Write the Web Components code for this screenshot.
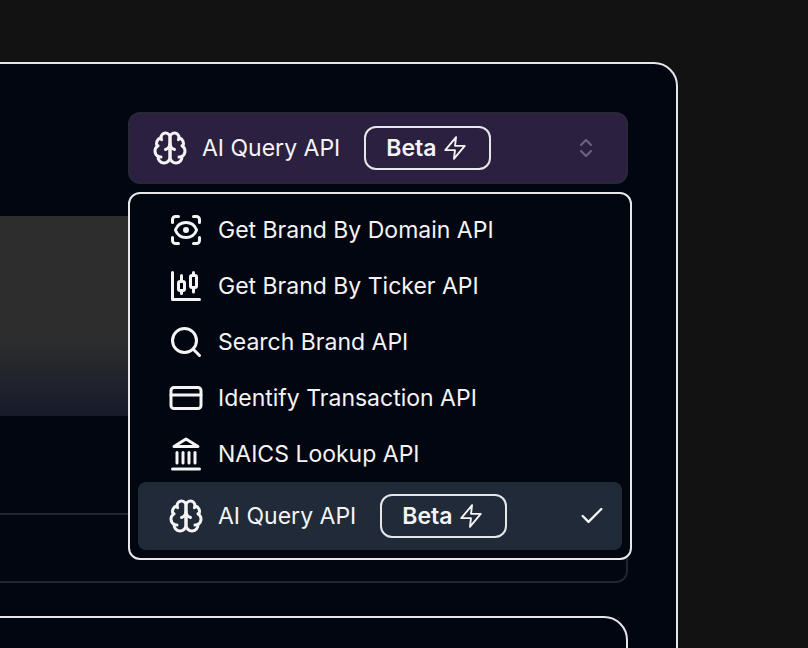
<!DOCTYPE html>
<html>
<head>
<meta charset="utf-8">
<style>
  html, body { margin: 0; height: 100%; overflow: hidden; background: #121212; }
  body { font-family: "Inter", "Liberation Sans", sans-serif; color: #f4f4f5; }
</style>
</head>
<body>
<api-panel>
  <api-picker>
    <api-select>
      <api-icon name="brain" slot="icon"></api-icon>
      AI Query API
      <beta-badge slot="badge">Beta</beta-badge>
    </api-select>
    <api-menu slot="menu">
      <api-item><api-icon name="scan" slot="icon"></api-icon>Get Brand By Domain API</api-item>
      <api-item><api-icon name="candle" slot="icon"></api-icon>Get Brand By Ticker API</api-item>
      <api-item><api-icon name="search" slot="icon"></api-icon>Search Brand API</api-item>
      <api-item><api-icon name="card" slot="icon"></api-icon>Identify Transaction API</api-item>
      <api-item><api-icon name="bank" slot="icon"></api-icon>NAICS Lookup API</api-item>
      <api-item selected><api-icon name="brain" slot="icon"></api-icon>AI Query API<beta-badge slot="badge">Beta</beta-badge></api-item>
    </api-menu>
  </api-picker>
</api-panel>

<script>
const ICONS = {
  brain: `<path d="M12 5a3 3 0 1 0-5.997.125 4 4 0 0 0-2.526 5.77 4 4 0 0 0 .556 6.588A4 4 0 1 0 12 18Z"/><path d="M12 5a3 3 0 1 1 5.997.125 4 4 0 0 1 2.526 5.77 4 4 0 0 1-.556 6.588A4 4 0 1 1 12 18Z"/><path d="M15 13a4.5 4.5 0 0 1-3-4 4.5 4.5 0 0 1-3 4"/><path d="M17.599 6.5a3 3 0 0 0 .399-1.375"/><path d="M6.003 5.125A3 3 0 0 0 6.401 6.5"/><path d="M3.477 10.896a4 4 0 0 1 .585-.396"/><path d="M19.938 10.5a4 4 0 0 1 .585.396"/><path d="M6 18a4 4 0 0 1-1.967-.516"/><path d="M19.967 17.484A4 4 0 0 1 18 18"/>`,
  scan: `<path d="M3 7V5a2 2 0 0 1 2-2h2"/><path d="M17 3h2a2 2 0 0 1 2 2v2"/><path d="M21 17v2a2 2 0 0 1-2 2h-2"/><path d="M7 21H5a2 2 0 0 1-2-2v-2"/><circle cx="12" cy="12" r="1"/><path d="M18.944 12.33a1 1 0 0 0 0-.66 7.5 7.5 0 0 0-13.888 0 1 1 0 0 0 0 .66 7.5 7.5 0 0 0 13.888 0"/>`,
  candle: `<path d="M9 5v4"/><rect x="7" y="9" width="4" height="6" rx="1"/><path d="M9 15v2"/><path d="M17 3v2"/><rect x="15" y="5" width="4" height="8" rx="1"/><path d="M17 13v3"/><path d="M3 3v18h18"/>`,
  search: `<circle cx="11" cy="11" r="8"/><path d="m21 21-4.3-4.3"/>`,
  card: `<rect x="2" y="5" width="20" height="14" rx="2"/><path d="M2 10h20"/>`,
  bank: `<path d="M3 22h18"/><path d="M6 18v-7"/><path d="M10 18v-7"/><path d="M14 18v-7"/><path d="M18 18v-7"/><path d="M12 2l8 5H4z"/>`,
  zap: `<path d="M13 2 3 14h9l-1 8 10-12h-9z"/>`,
  check: `<path d="M20 6 9 17l-5-5"/>`,
  updown: `<path d="m7 15 5 5 5-5"/><path d="m7 9 5-5 5 5"/>`
};

class ApiIcon extends HTMLElement {
  connectedCallback() {
    const size = this.getAttribute('size') || 36;
    const stroke = this.getAttribute('stroke') || 2;
    this.attachShadow({ mode: 'open' });
    this.shadowRoot.innerHTML = `
      <style>
        :host { display: block; flex: none; width: ${size}px; height: ${size}px; }
        svg { display: block; width: 100%; height: 100%; fill: none; stroke: currentColor; stroke-linecap: round; stroke-linejoin: round; }
      </style>
      <svg viewBox="0 0 24 24" stroke-width="${stroke}">${ICONS[this.getAttribute('name')]}</svg>`;
  }
}

class BetaBadge extends HTMLElement {
  connectedCallback() {
    this.attachShadow({ mode: 'open' });
    this.shadowRoot.innerHTML = `
      <style>
        :host {
          display: flex;
          align-items: center;
          gap: 6px;
          box-sizing: border-box;
          width: 127px;
          height: 44px;
          padding-left: 20px;
          border: 2px solid #e5e7eb;
          border-radius: 12px;
          font-size: 23px;
          font-weight: 600;
        }
      </style>
      <slot></slot>
      <api-icon name="zap" size="26" stroke="1.7"></api-icon>`;
  }
}

class ApiSelect extends HTMLElement {
  connectedCallback() {
    this.attachShadow({ mode: 'open' });
    this.shadowRoot.innerHTML = `
      <style>
        :host {
          display: flex;
          align-items: center;
          box-sizing: border-box;
          height: 72px;
          padding: 0 28px 0 22px;
          background: #2c2040;
          border: 2px solid #272838;
          border-radius: 12px;
          font-size: 23px;
        }
        .label { margin-left: 14px; white-space: nowrap; }
        ::slotted([slot=badge]) { margin-left: 24px; }
        .updown { margin-left: auto; color: #6f6380; }
      </style>
      <slot name="icon"></slot>
      <span class="label"><slot></slot></span>
      <slot name="badge"></slot>
      <api-icon class="updown" name="updown" size="24"></api-icon>`;
  }
}

class ApiMenu extends HTMLElement {
  connectedCallback() {
    this.attachShadow({ mode: 'open' });
    this.shadowRoot.innerHTML = `
      <style>
        :host {
          display: flex;
          flex-direction: column;
          box-sizing: border-box;
          width: 504px;
          padding: 8px;
          background: #020611;
          border: 2px solid #e5e7eb;
          border-radius: 12px;
        }
      </style>
      <slot></slot>`;
  }
}

class ApiItem extends HTMLElement {
  connectedCallback() {
    const selected = this.hasAttribute('selected');
    this.attachShadow({ mode: 'open' });
    this.shadowRoot.innerHTML = `
      <style>
        :host {
          display: flex;
          align-items: center;
          height: 56px;
          padding: 0 16px 0 30px;
          border-radius: 8px;
          font-size: 23px;
        }
        :host([selected]) { height: 68px; background: #202a38; }
        .label { margin-left: 14px; white-space: nowrap; }
        ::slotted([slot=badge]) { margin-left: 24px; }
        .check { margin-left: auto; }
      </style>
      <slot name="icon"></slot>
      <span class="label"><slot></slot></span>
      <slot name="badge"></slot>
      ${selected ? '<api-icon class="check" name="check" size="28"></api-icon>' : ''}`;
  }
}

class ApiPicker extends HTMLElement {
  connectedCallback() {
    this.attachShadow({ mode: 'open' });
    this.shadowRoot.innerHTML = `
      <style>
        :host { display: block; position: relative; width: 500px; align-self: flex-end; }
        .menu { position: absolute; top: 80px; left: 0; z-index: 2; }
      </style>
      <slot></slot>
      <div class="menu"><slot name="menu"></slot></div>`;
  }
}

class ApiPanel extends HTMLElement {
  connectedCallback() {
    this.attachShadow({ mode: 'open' });
    this.shadowRoot.innerHTML = `
      <style>
        :host {
          display: flex;
          flex-direction: column;
          box-sizing: border-box;
          width: 780px;
          height: 700px;
          margin: 62px 0 0 -102px;
          padding: 48px 48px 0;
          background: #020611;
          border: 2px solid #e5e7eb;
          border-radius: 24px;
        }
        .preview {
          height: 200px;
          margin-top: 32px;
          background: linear-gradient(180deg, #2d2d2d 0%, #2d2d2d 62%, #161b2a 100%);
        }
        .result {
          box-sizing: border-box;
          height: 70px;
          margin-top: 97px;
          border: 2px solid #1e2633;
          border-radius: 12px;
        }
        .next {
          flex: 1;
          margin-top: 33px;
          border: 2px solid #e5e7eb;
          border-radius: 24px;
        }
      </style>
      <slot></slot>
      <div class="preview"></div>
      <div class="result"></div>
      <div class="next"></div>`;
  }
}

customElements.define('api-icon', ApiIcon);
customElements.define('beta-badge', BetaBadge);
customElements.define('api-select', ApiSelect);
customElements.define('api-menu', ApiMenu);
customElements.define('api-item', ApiItem);
customElements.define('api-picker', ApiPicker);
customElements.define('api-panel', ApiPanel);
</script>
</body>
</html>
